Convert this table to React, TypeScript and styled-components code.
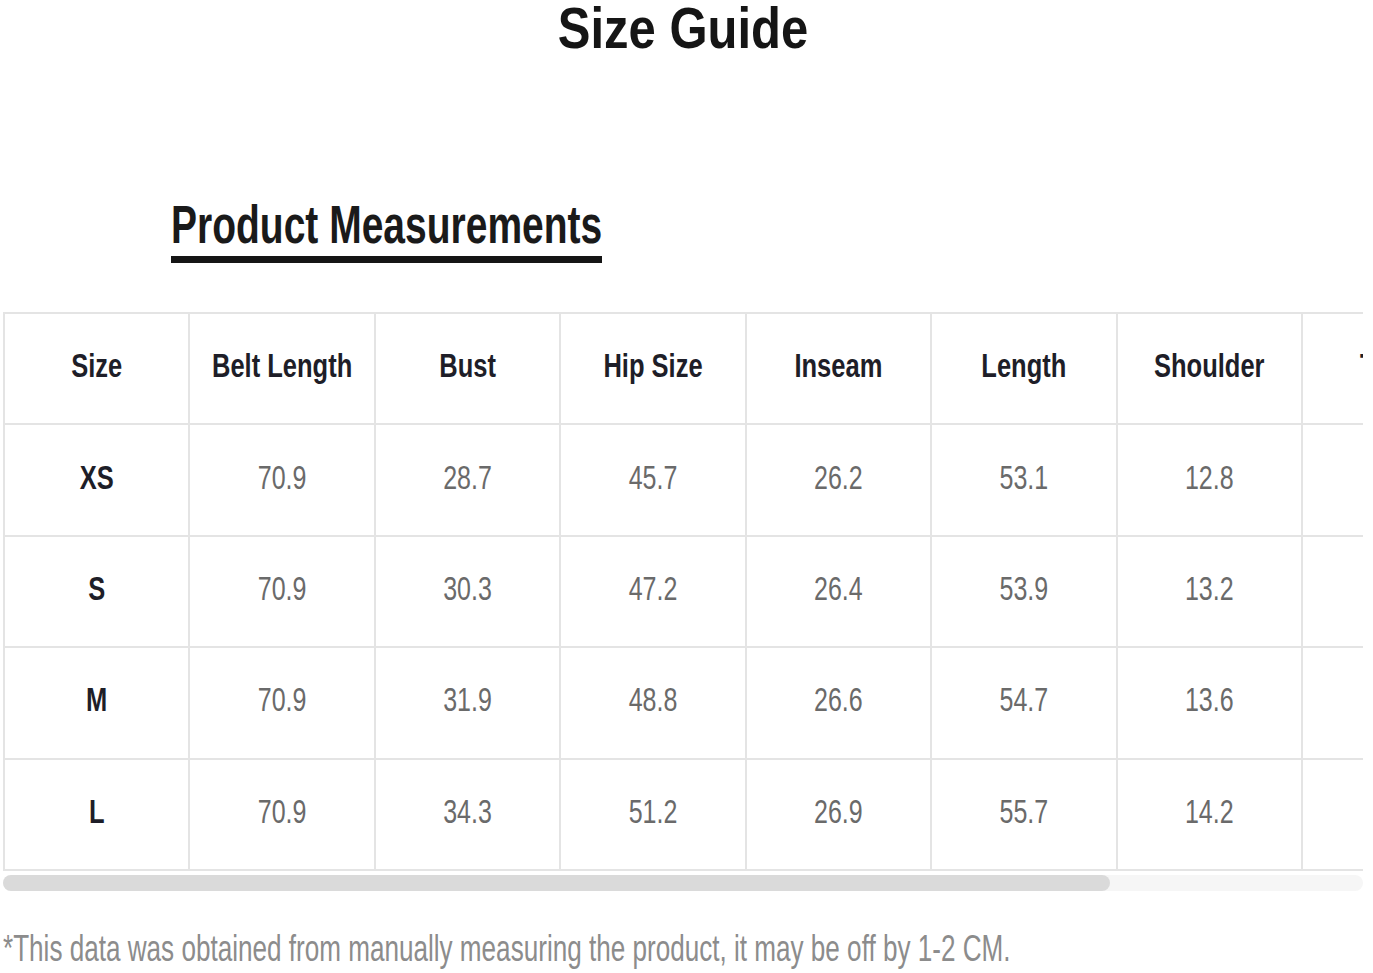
import React from "react";
import styled, { createGlobalStyle } from "styled-components";

const GlobalStyle = createGlobalStyle`
  html, body {
    margin: 0;
    padding: 0;
    background: #fff;
    font-family: "Liberation Sans", Arial, sans-serif;
  }
`;

const Page = styled.div`
  width: 1373px;
  padding: 0 10px 5px 3px;
  box-sizing: border-box;
`;

// text in the reference is drawn tall and narrow, so every label gets stretched
const Tall = styled.span<{ $scale: number }>`
  display: inline-block;
  transform: scaleY(${p => p.$scale});
  white-space: nowrap;
`;

const Title = styled.h1`
  margin: 0;
  height: 56px;
  text-align: center;
  font-size: 49px;
  line-height: 56px;
  font-weight: 700;
  color: #151515;
`;

const SectionHead = styled.h2`
  display: inline-block;
  margin: 146px 0 0 168px;
  padding-bottom: 8px;
  border-bottom: 7px solid #151515;
  font-size: 39px;
  line-height: 46px;
  font-weight: 700;
  color: #1a1a1a;
`;

const TableWrap = styled.div`
  margin-top: 49px;
  width: 1360px;
  overflow: hidden;
`;

const Grid = styled.div<{ $cols: number }>`
  display: grid;
  grid-template-columns: repeat(${p => p.$cols}, 185.43px);
  grid-auto-rows: 111.4px;
  width: max-content;
  border-top: 2px solid #e4e4e4;
  border-left: 2px solid #e4e4e4;
`;

const Cell = styled.div<{ $kind: "head" | "size" | "value" }>`
  display: flex;
  align-items: center;
  justify-content: center;
  box-sizing: border-box;
  padding-bottom: 6px;
  border-right: 2px solid #e4e4e4;
  border-bottom: 2px solid #e4e4e4;
  font-size: ${p => (p.$kind === "value" ? "25px" : "25.5px")};
  font-weight: ${p => (p.$kind === "value" ? 400 : 700)};
  color: ${p => (p.$kind === "value" ? "#6a6a6a" : "#1e1e28")};
`;

const ScrollTrack = styled.div`
  margin-top: 4px;
  width: 1360px;
  height: 16px;
  border-radius: 8px;
  background: #f6f6f6;
`;

const ScrollThumb = styled.div`
  height: 100%;
  border-radius: 8px;
  background: #dadada;
`;

const Note = styled.p`
  margin: 36px 0 0;
  font-size: 26.1px;
  line-height: 42px;
  color: #8c8c8c;
`;

const columns = [
  "Size",
  "Belt Length",
  "Bust",
  "Hip Size",
  "Inseam",
  "Length",
  "Shoulder",
  "Thigh",
  "Waist Size",
];

const rows = [
  ["XS", "70.9", "28.7", "45.7", "26.2", "53.1", "12.8", "21.3", "24.4"],
  ["S", "70.9", "30.3", "47.2", "26.4", "53.9", "13.2", "22.0", "26.0"],
  ["M", "70.9", "31.9", "48.8", "26.6", "54.7", "13.6", "22.8", "27.6"],
  ["L", "70.9", "34.3", "51.2", "26.9", "55.7", "14.2", "24.0", "29.9"],
];

const TEXT_SCALE = 1.3;

export default function App() {
  const visible = 1360;
  const full = columns.length * 185.43 + 2;
  const thumb = (visible / full) * 100;

  return (
    <Page>
      <GlobalStyle />
      <Title>
        <Tall $scale={1.17}>Size Guide</Tall>
      </Title>
      <SectionHead>
        <Tall $scale={1.36}>Product Measurements</Tall>
      </SectionHead>

      <TableWrap>
        <Grid $cols={columns.length}>
          {columns.map(c => (
            <Cell key={c} $kind="head">
              <Tall $scale={TEXT_SCALE}>{c}</Tall>
            </Cell>
          ))}
          {rows.map(r =>
            r.map((v, i) => (
              <Cell key={r[0] + i} $kind={i === 0 ? "size" : "value"}>
                <Tall $scale={TEXT_SCALE}>{v}</Tall>
              </Cell>
            ))
          )}
        </Grid>
      </TableWrap>
      <ScrollTrack>
        <ScrollThumb style={{ width: `${thumb}%` }} />
      </ScrollTrack>

      <Note>
        <Tall $scale={1.4}>
          *This data was obtained from manually measuring the product, it may be off by 1-2 CM.
        </Tall>
      </Note>
    </Page>
  );
}
